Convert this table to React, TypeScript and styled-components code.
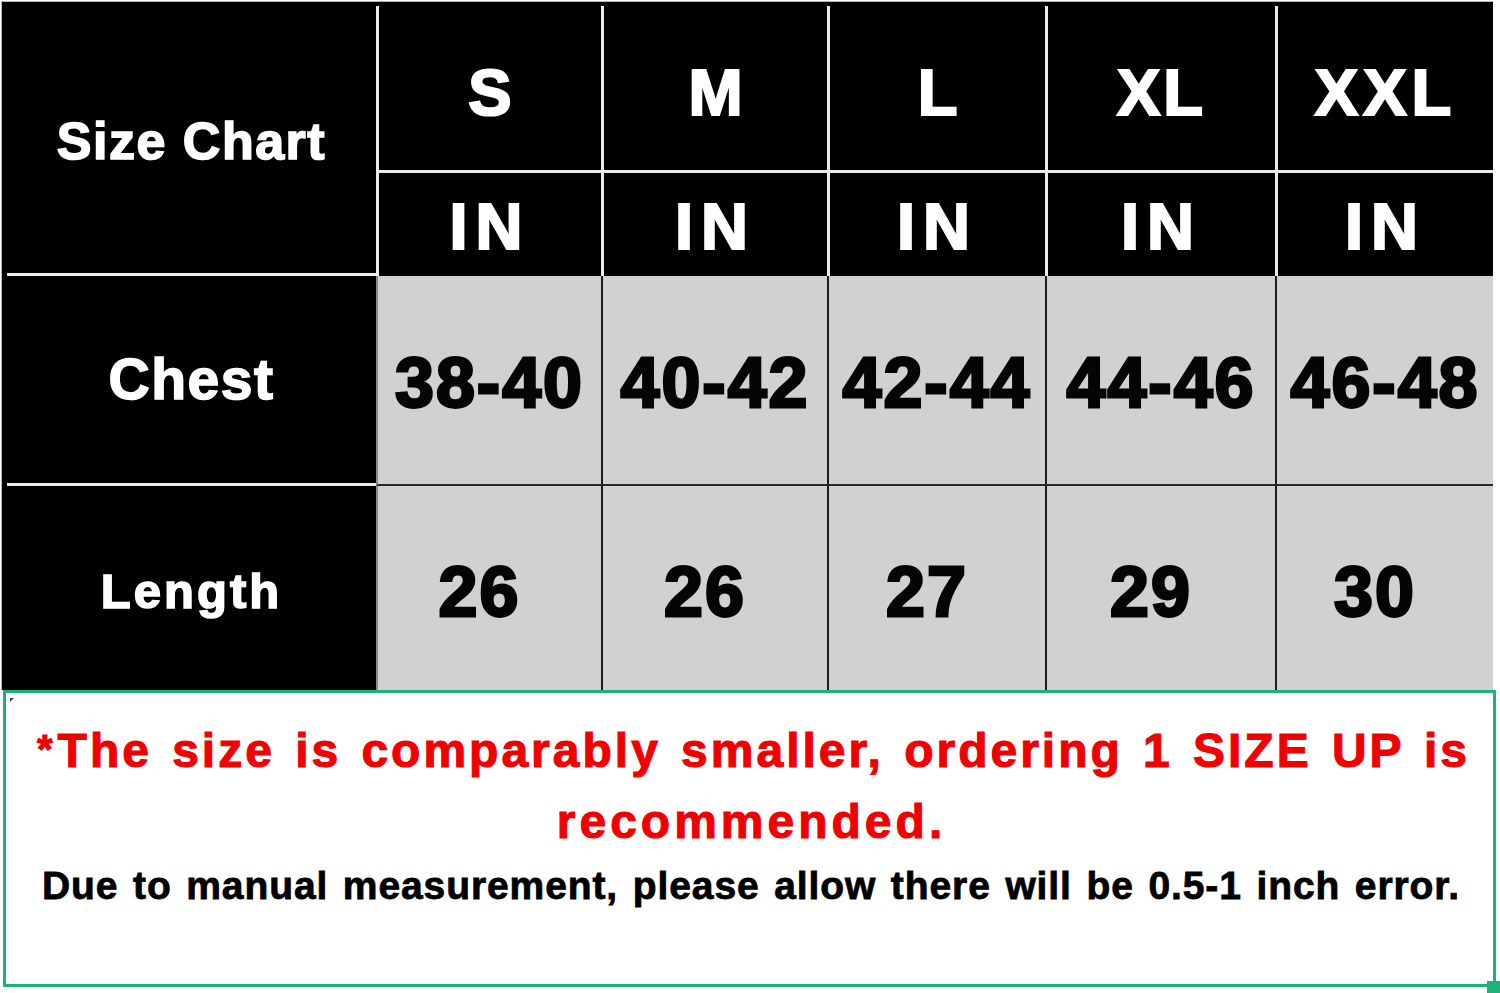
import React from "react";
import styled, { createGlobalStyle } from "styled-components";

const Global = createGlobalStyle`
  html, body { margin: 0; padding: 0; background: #ffffff; }
  body { font-family: "Liberation Sans", Arial, sans-serif; }
`;

const Page = styled.div`
  position: relative;
  width: 1500px;
  height: 993px;
  background: #ffffff;
  overflow: hidden;
`;

const Table = styled.div`
  margin: 1px 0 0 1px;
  width: 1492px;
  box-sizing: border-box;
  border-top: 1px solid #b4b4b4;
  border-left: 1px solid #b4b4b4;
  padding-top: 4px;
  background: #000000;
  display: grid;
  grid-template-columns: 374px 225px 226px 218px 230px 218px;
  grid-template-rows: 167px 103px 210px 204px;
`;

const LabelCell = styled.div<{ $span?: number }>`
  grid-row: span ${(p) => p.$span ?? 1};
  display: flex;
  padding-left: 5px;
  background: #000;
`;

const LabelInner = styled.div<{ $line?: boolean }>`
  flex: 1;
  display: flex;
  align-items: center;
  justify-content: center;
  box-sizing: border-box;
  border-bottom: ${(p) => (p.$line ? "3px solid #ececec" : "none")};
`;

const LabelText = styled.span<{ $size: number; $spacing?: number; $dy?: number }>`
  color: #ffffff;
  font-family: "Liberation Sans", Arial, sans-serif;
  font-weight: 700;
  font-size: ${(p) => p.$size}px;
  letter-spacing: ${(p) => p.$spacing ?? 0}px;
  -webkit-text-stroke: 1.6px #ffffff;
  line-height: 1;
  margin-top: ${(p) => p.$dy ?? 0}px;
`;

const HeadCell = styled.div<{ $bottom?: boolean }>`
  display: flex;
  align-items: center;
  justify-content: center;
  box-sizing: border-box;
  border-left: 3px solid #ececec;
  border-bottom: ${(p) => (p.$bottom ? "3px solid #ececec" : "none")};
  background: #000;
`;

const HeadText = styled.span<{ $spacing?: number; $dy?: number }>`
  color: #ffffff;
  font-family: "Liberation Sans", Arial, sans-serif;
  font-weight: 700;
  font-size: 65px;
  letter-spacing: ${(p) => p.$spacing ?? 0}px;
  -webkit-text-stroke: 2.2px #ffffff;
  line-height: 1;
  margin-top: ${(p) => p.$dy ?? 0}px;
`;

const DataCell = styled.div<{ $first?: boolean; $bottom?: boolean; $shift?: number; $dy?: number }>`
  display: flex;
  align-items: center;
  justify-content: center;
  box-sizing: border-box;
  background: #d1d1d1;
  border-left: 2px solid ${(p) => (p.$first ? "#8c8c8c" : "#1c1c1c")};
  border-bottom: ${(p) => (p.$bottom ? "2px solid #2a2a2a" : "none")};
  padding-right: ${(p) => p.$shift ?? 0}px;
  padding-top: ${(p) => p.$dy ?? 0}px;
`;

const DataText = styled.span<{ $spacing?: number }>`
  color: #050505;
  font-family: "Liberation Sans", Arial, sans-serif;
  font-weight: 700;
  font-size: 70px;
  letter-spacing: ${(p) => p.$spacing ?? 0}px;
  -webkit-text-stroke: 2.8px #050505;
  line-height: 1;
`;

const NoteBox = styled.div`
  position: relative;
  margin-left: 3px;
  width: 1493px;
  height: 297px;
  box-sizing: border-box;
  border: 3px solid #1fb07c;
  padding-top: 21px;
  background: #ffffff;
`;

const Tick = styled.div`
  position: absolute;
  left: 4px;
  top: 5px;
  width: 0;
  height: 0;
  border-top: 4px solid #444;
  border-right: 4px solid transparent;
`;

const RedLine = styled.div`
  color: #f00000;
  font-family: "Liberation Sans", Arial, sans-serif;
  font-weight: 700;
  font-size: 48px;
  line-height: 71px;
  letter-spacing: 3px;
  -webkit-text-stroke: 1.1px #f00000;
  text-align: justify;
  text-align-last: justify;
  padding: 0 23px 0 31px;
  white-space: nowrap;
`;

const RedCenter = styled.div`
  color: #f00000;
  font-family: "Liberation Sans", Arial, sans-serif;
  font-weight: 700;
  font-size: 48px;
  line-height: 71px;
  letter-spacing: 4px;
  -webkit-text-stroke: 1.1px #f00000;
  text-align: center;
  padding-left: 4px;
`;

const Star = styled.span`
  font-size: 40px;
  vertical-align: 4px;
  margin-right: 2px;
`;

const BlackLine = styled.div`
  margin-top: 9px;
  color: #000000;
  font-family: "Liberation Sans", Arial, sans-serif;
  font-weight: 700;
  font-size: 39px;
  line-height: 40px;
  letter-spacing: 0.9px;
  -webkit-text-stroke: 0.8px #000;
  text-align: justify;
  text-align-last: justify;
  padding: 0 33px 0 36px;
  white-space: nowrap;
`;

const CornerMark = styled.div`
  position: absolute;
  right: 0;
  bottom: 0;
  width: 13px;
  height: 12px;
  background: #1fb07c;
`;

const sizes = ["S", "M", "L", "XL", "XXL"];
const sizeSpacing = [0, 0, 0, 3, 5];
const chest = ["38-40", "40-42", "42-44", "44-46", "46-48"];
const lengths = ["26", "26", "27", "29", "30"];

export default function App() {
  return (
    <Page>
      <Global />
      <Table>
        <LabelCell $span={2}>
          <LabelInner $line>
            <LabelText $size={52} $spacing={1.5} $dy={2}>
              Size Chart
            </LabelText>
          </LabelInner>
        </LabelCell>
        {sizes.map((s, i) => (
          <HeadCell key={s} $bottom>
            <HeadText $spacing={sizeSpacing[i]} $dy={8}>{s}</HeadText>
          </HeadCell>
        ))}
        {sizes.map((s) => (
          <HeadCell key={"in" + s}>
            <HeadText $spacing={8} $dy={4}>IN</HeadText>
          </HeadCell>
        ))}
        <LabelCell>
          <LabelInner $line>
            <LabelText $size={57} $spacing={1.5}>
              Chest
            </LabelText>
          </LabelInner>
        </LabelCell>
        {chest.map((c, i) => (
          <DataCell key={c} $first={i === 0} $bottom $dy={6}>
            <DataText $spacing={2}>{c}</DataText>
          </DataCell>
        ))}
        <LabelCell>
          <LabelInner>
            <LabelText $size={49} $spacing={3} $dy={6}>
              Length
            </LabelText>
          </LabelInner>
        </LabelCell>
        {lengths.map((l, i) => (
          <DataCell key={"len" + i} $first={i === 0} $shift={20} $dy={8}>
            <DataText $spacing={2}>{l}</DataText>
          </DataCell>
        ))}
      </Table>
      <NoteBox>
        <Tick />
        <RedLine>
          <Star>*</Star>The size is comparably smaller, ordering 1 SIZE UP is
        </RedLine>
        <RedCenter>recommended.</RedCenter>
        <BlackLine>
          Due to manual measurement, please allow there will be 0.5-1 inch error.
        </BlackLine>
      </NoteBox>
      <CornerMark />
    </Page>
  );
}
